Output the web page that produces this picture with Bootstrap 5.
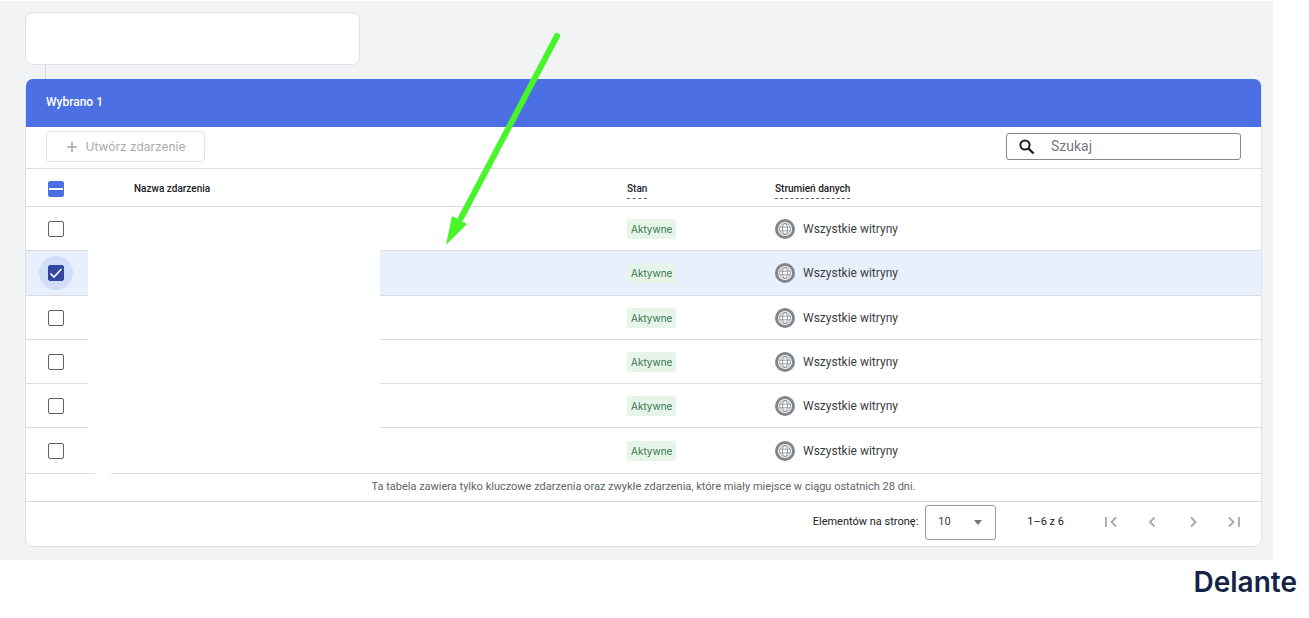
<!DOCTYPE html>
<html lang="pl">
<head>
<meta charset="utf-8">
<meta name="viewport" content="width=device-width, initial-scale=1">
<title>Zdarzenia</title>
<link rel="stylesheet" href="https://cdn.jsdelivr.net/npm/bootstrap@5.3.0/dist/css/bootstrap.min.css">
<style>
  body { font-family: Roboto, "Noto Sans", sans-serif; font-size: 12px; color: #3c4043; background: #fff; }
  .workspace { background: #f1f3f4; margin: 1px 36px 0 0; padding: 11px 11px 13px 25px; }
  .panel { --bs-card-border-color: #dfe1e5; --bs-card-border-radius: 8px; --bs-card-inner-border-radius: 7px; }
  .summary { width: 335px; height: 53px; }
  .stem { width: 1px; height: 14px; margin-left: 20px; background: #d5d8dc; }
  .selection-bar { height: 48px; margin-top: -1px; padding: 0 20px 2px; background: #4c6fe3; color: #fff; font-size: 12px; font-weight: 500; border-radius: 7px 7px 0 0; }
  .toolbar { height: 42px; padding: 0 20px 2px; border-bottom: 1px solid #dadce0; }
  .create-btn { height: 31px; width: 159px; padding: 0; gap: 8px; font: 400 12px Inter, sans-serif; border-radius: 3px; --bs-btn-disabled-color: #a9abae; --bs-btn-disabled-border-color: #e6e7e9; --bs-btn-disabled-opacity: 1; }
  .search-box { width: 235px; height: 27px; border: 1px solid #85888c; border-radius: 3px; padding: 0 12px; gap: 16px; }
  .search-box input { font-size: 14px; color: #5f6368; }
  .search-box input::placeholder { color: #777a7e; opacity: 1; }
  .events { table-layout: fixed; --bs-table-color: #3c4043; --bs-table-bg: transparent; border-color: #dadce0; }
  .events th, .events td { height: 44px; padding: 1px 0 0; border-bottom: 1px solid #dadce0; }
  .events thead th { height: 37px; padding-top: 4px; vertical-align: middle; font-size: 10px; font-weight: 500; line-height: 14px; color: #202124; }
  .events thead .tick { height: 32px; }
  .events thead .name-head { padding-left: 46px; }
  .events tbody tr.selected td { height: 45px; background: #e8effd; }
  .events tbody tr:last-child td { height: 47px; }
  .events tbody td.event-name, .events tbody tr.selected td.event-name { background: #fff; border-bottom-color: #fff; }
  .events tbody tr:last-child td { border-bottom: 0; }
  .events tbody tr:last-child td:not(.event-name) { background: linear-gradient(#dadce0, #dadce0) bottom / 100% 1px no-repeat; }
  .events tbody tr:last-child td.event-name { background: linear-gradient(90deg, #dadce0 7px, #fff 7px 23px, #dadce0 23px) bottom / 100% 1px no-repeat; }
  .col-check { width: 62px; } .col-name { width: 292px; } .col-gap { width: 247px; } .col-state { width: 148px; }
  .hint { display: inline-block; border-bottom: 1px dashed #5f6368; margin-top: 3px; padding-bottom: 2px; }
  .tick { width: 34px; height: 34px; margin-left: 13px; }
  .selected .tick { background: #d2ddf9; }
  .tick .form-check-input { width: 16px; height: 16px; margin: 0; border: 1px solid #5f6368; border-radius: 2px; background-color: #fff; box-shadow: none; }
  .tick .form-check-input:checked { background-color: #33479f; border-color: #33479f; background-size: 14px;
    background-image: url("data:image/svg+xml,%3Csvg xmlns='http://www.w3.org/2000/svg' viewBox='0 0 14 14'%3E%3Cpath d='M1.5 7.5L5 11l7.5-8' fill='none' stroke='%23fff' stroke-width='1.6'/%3E%3C/svg%3E"); }
  .tick .form-check-input:indeterminate { background-color: #4c6fe3; border-color: #4c6fe3; background-size: 14px;
    background-image: url("data:image/svg+xml,%3Csvg xmlns='http://www.w3.org/2000/svg' viewBox='0 0 14 14'%3E%3Cpath d='M0 6h14v2H0z' fill='%23fff'/%3E%3C/svg%3E"); }
  .state { padding: 4px; border-radius: 2px; background: #e6f4ea; color: #39774c; font: 400 10px/12px Inter, sans-serif; }
  .note { height: 28px; font-size: 11px; color: #5f6368; border-bottom: 1px solid #dadce0; }
  .pager { height: 44px; padding: 0 15px 4px; font-size: 11px; color: #202124; }
  .pager label { font-size: 11px; margin-right: 7px; }
  .pager select { width: 71px; height: 35px; padding: 0 12px; font-size: 11px; color: #3c4043; border: 1px solid #96999d; border-radius: 3px;
    background: #fff url("data:image/svg+xml,%3Csvg xmlns='http://www.w3.org/2000/svg' viewBox='0 0 8 5'%3E%3Cpath d='M0 0h8L4 5z' fill='%23777'/%3E%3C/svg%3E") no-repeat right 13px center / 8px 5px; }
  .range { margin: 0 35px 0 31px; }
  .pages { gap: 17px; }
  .pages .btn { width: 24px; height: 24px; padding: 0; border: 0; opacity: 1; }
  .pages svg { display: block; stroke: #a6a8ab; fill: none; stroke-width: 1.8; }
  .pointer { position: absolute; left: 440px; top: 30px; pointer-events: none; }
  .brand { font: 600 28px/32px Inter, sans-serif; color: #142348; margin: 6px 12px 0 0; }
</style>
</head>
<body>
<main class="workspace position-relative">
  <div class="card panel summary"></div>
  <div class="stem"></div>
  <section class="card panel">
    <div class="selection-bar d-flex align-items-center">Wybrano 1</div>
    <div class="toolbar d-flex align-items-center justify-content-between">
      <button type="button" class="btn create-btn d-flex align-items-center justify-content-center" disabled>
        <svg width="12" height="12" viewBox="0 0 12 12" stroke="#a9abae" stroke-width="1.6"><path d="M6 1v10M1 6h10"/></svg>
        Utwórz zdarzenie
      </button>
      <div class="search-box d-flex align-items-center">
        <svg width="16" height="16" viewBox="0 0 16 16" fill="none" stroke="#202124" class="flex-shrink-0"><circle cx="6" cy="6" r="4.6" stroke-width="2"/><path d="M9.5 9.5l5 5" stroke-width="2.4"/></svg>
        <input type="search" class="form-control-plaintext p-0" placeholder="Szukaj" aria-label="Szukaj">
      </div>
    </div>
    <table class="table events align-middle mb-0">
      <colgroup><col class="col-check"><col class="col-name"><col class="col-gap"><col class="col-state"><col></colgroup>
      <thead>
        <tr>
          <th><div class="tick d-flex align-items-center justify-content-center"><input type="checkbox" id="all" class="form-check-input" aria-label="Zaznacz wszystko"></div></th>
          <th class="name-head">Nazwa zdarzenia</th><th></th>
          <th><span class="hint">Stan</span></th><th><span class="hint">Strumień danych</span></th>
        </tr>
      </thead>
      <tbody id="rows"></tbody>
    </table>
    <div class="note d-flex align-items-center justify-content-center text-center">Ta tabela zawiera tylko kluczowe zdarzenia oraz zwykłe zdarzenia, które miały miejsce w ciągu ostatnich 28 dni.</div>
    <div class="pager d-flex align-items-center justify-content-end">
      <label for="size">Elementów na stronę:</label>
      <select id="size" class="form-select"><option>10</option><option>25</option></select>
      <span class="range">1–6 z 6</span>
      <div class="pages d-flex">
        <button class="btn" type="button" disabled aria-label="Pierwsza strona"><svg width="24" height="24"><path d="M7 7v10M17 7.5l-4.5 4.5 4.5 4.5"/></svg></button>
        <button class="btn" type="button" disabled aria-label="Poprzednia strona"><svg width="24" height="24"><path d="M14.5 7.5l-4.5 4.5 4.5 4.5"/></svg></button>
        <button class="btn" type="button" disabled aria-label="Następna strona"><svg width="24" height="24"><path d="M10 7.5l4.5 4.5-4.5 4.5"/></svg></button>
        <button class="btn" type="button" disabled aria-label="Ostatnia strona"><svg width="24" height="24"><path d="M7 7.5l4.5 4.5-4.5 4.5M17 7v10"/></svg></button>
      </div>
    </div>
  </section>
  <svg class="pointer" width="124" height="218" viewBox="0 0 124 218" fill="#48f52b" aria-hidden="true"><path d="M117 5L21 187" stroke="#48f52b" stroke-width="6" stroke-linecap="round"/><path d="M6 214L12 185L27 193Z"/></svg>
</main>
<footer class="d-flex justify-content-end"><a href="#" class="brand text-decoration-none">Delante</a></footer>
<script src="https://cdn.jsdelivr.net/npm/bootstrap@5.3.0/dist/js/bootstrap.bundle.min.js"></script>
<script>
  const globe = `<svg width="20" height="20" viewBox="0 0 20 20" fill="none"><circle cx="10" cy="10" r="10" fill="#80868b"/><circle cx="10" cy="10" r="7" fill="#fff"/><g stroke="#80868b" stroke-width=".8"><circle cx="10" cy="10" r="5.5"/><ellipse cx="10" cy="10" rx="2.5" ry="5.5"/><path d="M4.5 8.2h11M4.5 11.8h11"/></g></svg>`;
  const selected = 1;
  document.getElementById('rows').innerHTML = Array.from({ length: 6 }, (_, i) => `
    <tr class="${i === selected ? 'selected' : ''}">
      <td><div class="tick rounded-circle d-flex align-items-center justify-content-center"><input type="checkbox" class="form-check-input" aria-label="Zaznacz zdarzenie ${i + 1}" ${i === selected ? 'checked' : ''}></div></td>
      <td class="event-name"></td><td></td>
      <td><span class="state">Aktywne</span></td>
      <td><div class="d-flex align-items-center gap-2">${globe}<span>Wszystkie witryny</span></div></td>
    </tr>`).join('');
  document.getElementById('all').indeterminate = true;
</script>
</body>
</html>
